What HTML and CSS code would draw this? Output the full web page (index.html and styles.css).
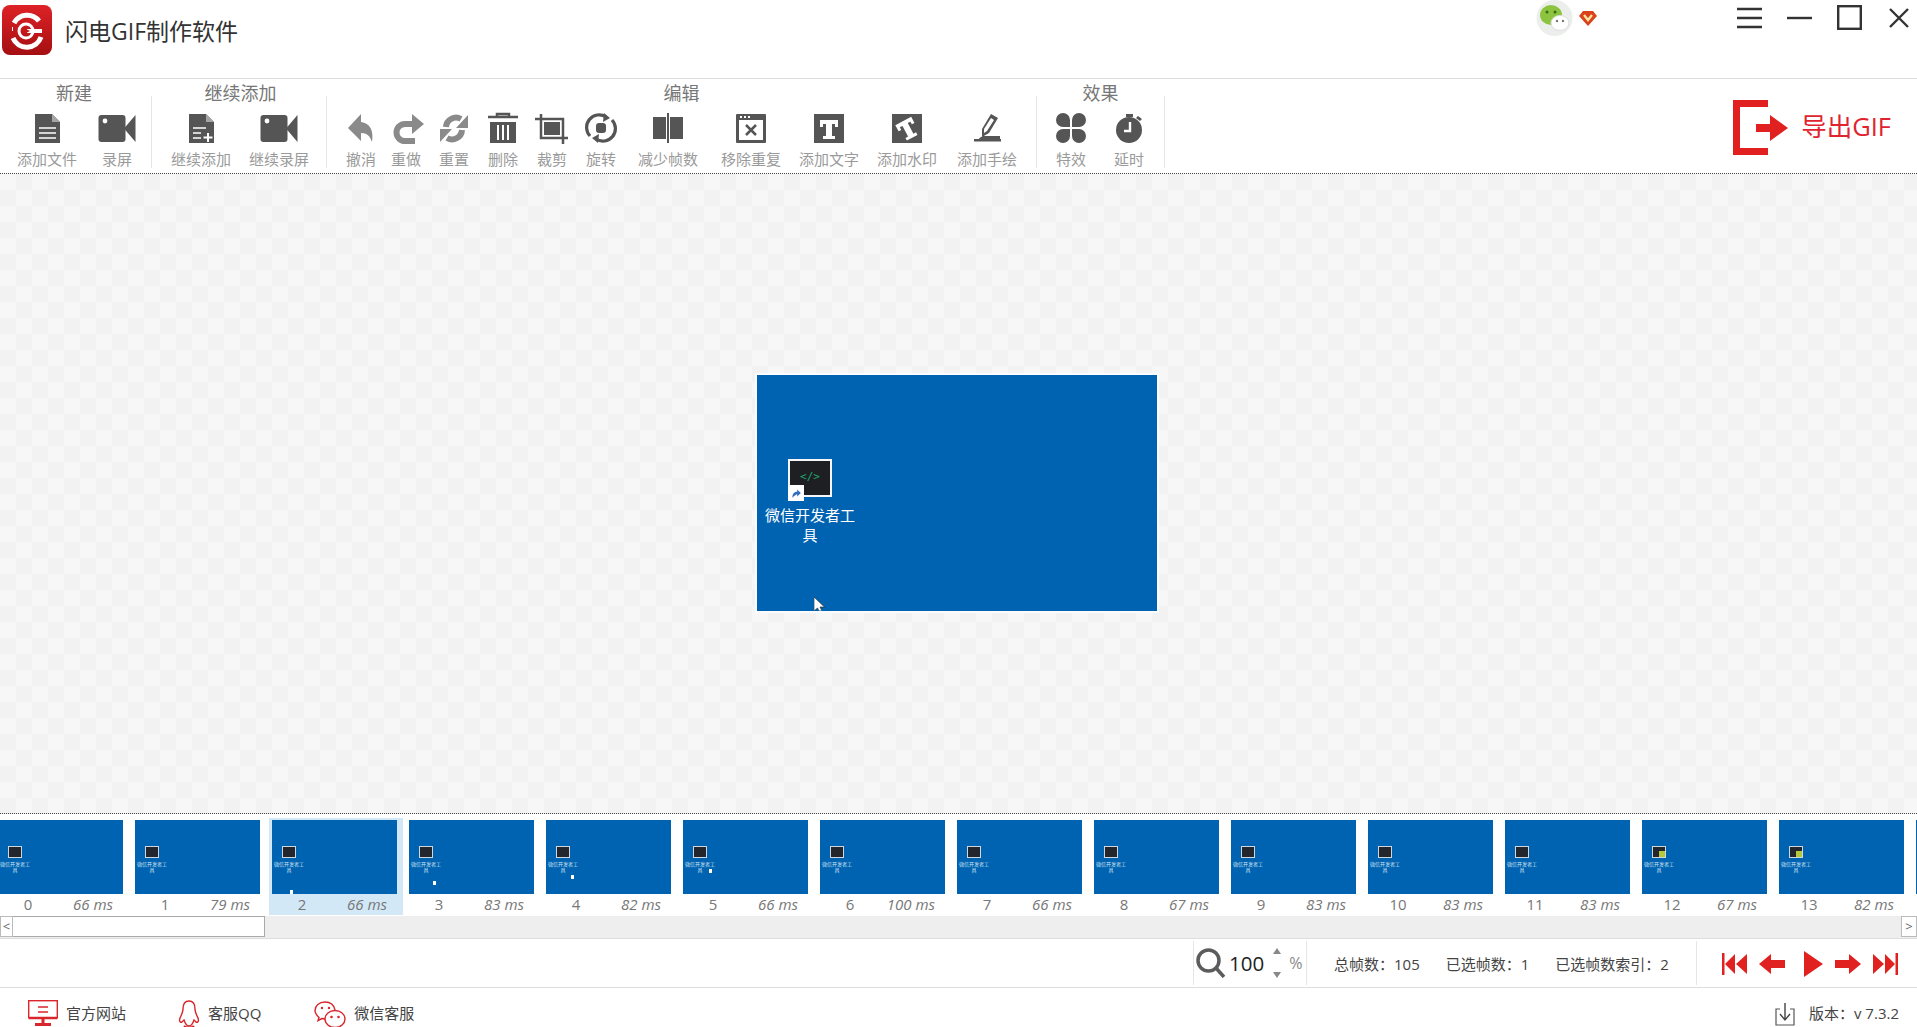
FILE: index.html
```html
<!DOCTYPE html>
<html lang="zh-CN">
<head>
  <meta charset="UTF-8" />
  <title>闪电GIF制作软件</title>
  <link rel="stylesheet" href="styles.css">
</head>
<body>

  <!-- 标题栏 -->
  <header class="titlebar">
    <svg class="logo" viewBox="0 0 50 50">
      <defs>
        <linearGradient id="logoBg" x1="0" y1="0" x2="0" y2="1">
          <stop offset="0" stop-color="#dd2226"/>
          <stop offset="1" stop-color="#a50f12"/>
        </linearGradient>
      </defs>
      <rect width="50" height="50" rx="8" fill="url(#logoBg)"/>
      <path d="M12 18a15 15 0 0 1 25-2M39 32a15 15 0 0 1-28 1" fill="none" stroke="#fff" stroke-width="5"/>
      <path d="M11 24h-1M25 26h15" fill="none" stroke="#fff" stroke-width="4"/>
      <circle cx="24" cy="26" r="7" fill="none" stroke="#fff" stroke-width="3"/>
      <path d="M22 23l6 3-6 3z" fill="#c8161b"/>
    </svg>
    <div class="app-name">闪电GIF制作软件</div>
    <div class="title-right">
      <svg class="avatar" viewBox="0 0 37 37">
        <circle cx="18.5" cy="18" r="18" fill="#eceeec"/>
        <ellipse cx="15" cy="15" rx="11" ry="10" fill="#8cc440"/>
        <circle cx="11" cy="12" r="1.5" fill="#3c6a12"/>
        <circle cx="19" cy="12" r="1.5" fill="#3c6a12"/>
        <ellipse cx="24" cy="23" rx="9" ry="7.5" fill="#fff" stroke="#ddd"/>
        <circle cx="21" cy="21" r="1.2" fill="#777"/>
        <circle cx="27" cy="21" r="1.2" fill="#777"/>
      </svg>
      <svg class="vip" viewBox="0 0 18 16">
        <path d="M4 1h10l4 5-9 10L0 6z" fill="#d9421a"/>
        <path d="M5 5l4 5 4-5" fill="none" stroke="#fbe3a0" stroke-width="2.4"/>
      </svg>
      <svg class="win-btn menu" viewBox="0 0 25 25"><path d="M0 4h25M0 13h25M0 22h25" stroke="#333" stroke-width="2.4"/></svg>
      <svg class="win-btn min" viewBox="0 0 25 25"><path d="M0 13h25" stroke="#333" stroke-width="2.4"/></svg>
      <svg class="win-btn max" viewBox="0 0 25 25"><rect x="1.2" y="1.2" width="22.6" height="22.6" fill="none" stroke="#333" stroke-width="2.4"/></svg>
      <svg class="win-btn close" viewBox="0 0 20 20"><path d="M1 1l18 18M19 1L1 19" stroke="#333" stroke-width="2.4"/></svg>
    </div>
  </header>

  <!-- 工具栏 -->
  <div class="toolbar">
    <section class="group group-new">
      <h2>新建</h2>
      <div class="tools">
        <div class="tool wide">
          <svg viewBox="0 0 40 32"><path d="M8 2h17l8 8v21H8z" fill="#555"/><path d="M25 2l8 8h-8z" fill="#a5a5a5"/><path d="M12 16h17M12 21h17M12 26h17" stroke="#fff" stroke-width="1.5"/></svg>
          <span>添加文件</span>
        </div>
        <div class="tool">
          <svg viewBox="0 0 40 32"><rect x="1.5" y="3" width="27" height="27" rx="3" fill="#555"/><path d="M27 16.5L38.5 3v27z" fill="#555"/><circle cx="8" cy="9" r="2.4" fill="#fff"/></svg>
          <span>录屏</span>
        </div>
      </div>
    </section>
    <div class="sep"></div>
    <section class="group group-add">
      <h2>继续添加</h2>
      <div class="tools">
        <div class="tool wide">
          <svg viewBox="0 0 40 32"><path d="M8 2h17l8 8v21H8z" fill="#555"/><path d="M25 2l8 8h-8z" fill="#a5a5a5"/><path d="M12 16h13M12 21h8M12 26h8" stroke="#fff" stroke-width="1.5"/><path d="M27 21v9M22.5 25.5h9" stroke="#fff" stroke-width="2"/></svg>
          <span>继续添加</span>
        </div>
        <div class="tool wide">
          <svg viewBox="0 0 40 32"><rect x="1.5" y="3" width="27" height="27" rx="3" fill="#555"/><path d="M27 16.5L38.5 3v27z" fill="#555"/><circle cx="8" cy="9" r="2.4" fill="#fff"/></svg>
          <span>继续录屏</span>
        </div>
      </div>
    </section>
    <div class="sep"></div>
    <section class="group group-edit">
      <h2>编辑</h2>
      <div class="tools">
        <div class="tool off">
          <svg viewBox="0 0 40 32"><path d="M20 2L7 16l13 13v-8c6 0 9 3 11 9 2-11-2-19-11-20z" fill="#8a8a8a"/></svg>
          <span>撤消</span>
        </div>
        <div class="tool off">
          <svg viewBox="0 0 40 32"><path d="M26 2l12 10-12 10z" fill="#8a8a8a"/><path d="M28 12h-9a8.5 8.5 0 0 0 0 17h10" fill="none" stroke="#8a8a8a" stroke-width="6"/></svg>
          <span>重做</span>
        </div>
        <div class="tool off">
          <svg viewBox="0 0 40 32"><path d="M12 15a10 10 0 0 1 15-8" fill="none" stroke="#8a8a8a" stroke-width="6"/><path d="M34 3v13H22z" fill="#8a8a8a"/><path d="M28 18a10 10 0 0 1-15 8" fill="none" stroke="#8a8a8a" stroke-width="6"/><path d="M6 30V17h12z" fill="#8a8a8a"/></svg>
          <span>重置</span>
        </div>
        <div class="tool">
          <svg viewBox="0 0 40 32"><path d="M5 5h30M14 5V2h12v3" fill="none" stroke="#555" stroke-width="2.5"/><rect x="7" y="10" width="26" height="21" fill="#555"/><path d="M15 13v15M20 13v15M25 13v15" stroke="#fff" stroke-width="2"/></svg>
          <span>删除</span>
        </div>
        <div class="tool">
          <svg viewBox="0 0 40 32"><path d="M9 2v24h27M3 7h28v25" fill="none" stroke="#555" stroke-width="2.5"/><rect x="12" y="10" width="16" height="13" fill="#555"/></svg>
          <span>裁剪</span>
        </div>
        <div class="tool">
          <svg viewBox="0 0 40 32"><path d="M9 24A12.5 12.5 0 0 1 25 5" fill="none" stroke="#555" stroke-width="3.2"/><path d="M31 8A12.5 12.5 0 0 1 15 27" fill="none" stroke="#555" stroke-width="3.2"/><path d="M23 1l6 5-7 4zM17 31l-6-5 7-4z" fill="#555"/><rect x="15" y="11" width="10" height="10" rx="3" fill="#555"/></svg>
          <span>旋转</span>
        </div>
        <div class="tool wide">
          <svg viewBox="0 0 40 32"><rect x="5" y="5" width="13" height="22" fill="#555"/><rect x="22" y="5" width="13" height="22" fill="#555"/><rect x="19" y="1" width="2" height="30" fill="#555"/></svg>
          <span>减少帧数</span>
        </div>
        <div class="tool wide">
          <svg viewBox="0 0 40 32"><rect x="5" y="2" width="30" height="29" rx="1" fill="#555"/><rect x="8" y="8" width="24" height="20" fill="#fff"/><path d="M9 5h2M13 5h2M17 5h2" stroke="#fff" stroke-width="2"/><path d="M15 13l10 10M25 13L15 23" stroke="#555" stroke-width="2.5"/></svg>
          <span>移除重复</span>
        </div>
        <div class="tool wide">
          <svg viewBox="0 0 40 32"><rect x="5" y="2" width="30" height="29" fill="#555"/><path d="M11 8h18v7h-3v-3h-3v12h3v3H14v-3h3V12h-3v3h-3z" fill="#fff"/></svg>
          <span>添加文字</span>
        </div>
        <div class="tool wide">
          <svg viewBox="0 0 40 32"><rect x="5" y="2" width="30" height="29" fill="#555"/><path d="M11 8h18v7h-3v-3h-3v12h3v3H14v-3h3V12h-3v3h-3z" fill="#fff" transform="rotate(-28 20 16)"/></svg>
          <span>添加水印</span>
        </div>
        <div class="tool wide">
          <svg viewBox="0 0 40 32"><path d="M24 2l7 4-9 15-7 4 0-8z" fill="#555"/><path d="M24 6l3 2-7 11-3 2 0-4z" fill="#fff"/><path d="M16 24c-2 1-4 2-4 3h21v-3z" fill="#555"/><rect x="7" y="27" width="27" height="2.5" fill="#555"/></svg>
          <span>添加手绘</span>
        </div>
      </div>
    </section>
    <div class="sep"></div>
    <section class="group group-fx">
      <h2>效果</h2>
      <div class="tools">
        <div class="tool">
          <svg viewBox="0 0 40 32"><path d="M19 15H12A7 7 0 1 1 19 8zM21 15V8a7 7 0 1 1 7 7zM19 17v7a7 7 0 1 1-7-7zM21 17h7a7 7 0 1 1-7 7z" fill="#555"/></svg>
          <span>特效</span>
        </div>
        <div class="tool">
          <svg viewBox="0 0 40 32"><circle cx="20" cy="18" r="13" fill="#555"/><path d="M17 2h7v3h-7zM29 4l4 3-2 2-4-3z" fill="#555"/><path d="M21 10v9h-6" fill="none" stroke="#fff" stroke-width="2.4"/></svg>
          <span>延时</span>
        </div>
      </div>
    </section>
    <div class="sep"></div>

    <div class="export">
      <svg viewBox="0 0 56 56"><path d="M35 3.5H3.5v48H35" fill="none" stroke="#e0211f" stroke-width="7"/><path d="M23 24h14v-9l18 13-18 13v-9H23z" fill="#e0211f"/></svg>
      <span>导出GIF</span>
    </div>
  </div>

  <!-- 预览区 -->
  <main class="canvas">
    <div class="frame">
      <div class="shortcut">
        <div class="app-icon">
          <span class="code">&lt;/&gt;</span>
          <span class="arrow-badge"><svg viewBox="0 0 10 10"><path d="M2 9C2 5 4 4 6 4V2l3 3-3 3V6C5 6 4 7 2 9z" fill="#2d6cc0"/></svg></span>
        </div>
        <div class="app-label">微信开发者工具</div>
      </div>
      <svg class="cursor" viewBox="0 0 11 16"><path d="M0 0v14l3.5-3 2.5 5 2.5-1-2.5-5h4.5z" fill="#fff" stroke="#222" stroke-width=".6"/></svg>
    </div>
  </main>

  <!-- 帧列表 -->
  <div class="strip" id="strip"></div>

  <div class="scrollbar">
    <div class="scroll-btn">&lt;</div>
    <div class="scroll-thumb"></div>
    <div class="scroll-btn scroll-next">&gt;</div>
  </div>

  <!-- 状态栏 -->
  <div class="statusbar">
    <div class="zoom-box">
      <svg class="zoom-icon" viewBox="0 0 30 30"><circle cx="12.5" cy="12.5" r="10.5" fill="none" stroke="#5c5c5c" stroke-width="3.5"/><path d="M20 20l8 9" stroke="#5c5c5c" stroke-width="3.5"/></svg>
      <span class="zoom-val">100</span>
      <span class="zoom-spin"><i class="up"></i><i class="down"></i></span>
      <span class="zoom-pct">%</span>
    </div>
    <div class="stats">
      <span>总帧数：105</span>
      <span>已选帧数：1</span>
      <span>已选帧数索引：2</span>
    </div>
    <div class="player">
      <svg viewBox="0 0 26 24" width="26" height="24"><path d="M1 1h2.5v22H1zM14 2v20L4 12zM26 2v20L15 12z" fill="#e0211f"/></svg>
      <svg viewBox="0 0 26 24" width="26" height="24"><path d="M12 2v6h14v8H12v6L0 12z" fill="#e0211f"/></svg>
      <svg class="play" viewBox="0 0 20 26" width="20" height="26"><path d="M1 0l19 13L1 26z" fill="#e0211f"/></svg>
      <svg viewBox="0 0 26 24" width="26" height="24"><path d="M14 2v6H0v8h14v6l12-10z" fill="#e0211f"/></svg>
      <svg viewBox="0 0 26 24" width="26" height="24"><path d="M25 1h-2.5v22H25zM12 2v20l10-10zM0 2v20l11-10z" fill="#e0211f"/></svg>
    </div>
  </div>

  <footer class="footer">
    <div class="link link-site">
      <svg viewBox="0 0 30 30" width="30" height="30"><rect x=".7" y=".7" width="28.6" height="17" fill="none" stroke="#d8262c" stroke-width="1.4"/><path d="M10 7h10M10 12h10" stroke="#d8262c" stroke-width="1.4"/><path d="M.7 18h28.6" stroke="#d8262c" stroke-width="2.5"/><path d="M15 18v6M7 24.5h16" stroke="#d8262c" stroke-width="3"/></svg>
      <span>官方网站</span>
    </div>
    <div class="link link-qq">
      <svg viewBox="0 0 22 30" width="22" height="30"><path d="M11 1c-4 0-6 3-6 8 0 3-1 5-3 9-1 3 0 5 2 4l2-2c1 3 2 6 5 6s4-3 5-6l2 2c2 1 3-1 2-4-2-4-3-6-3-9 0-5-2-8-6-8z" fill="none" stroke="#d8262c" stroke-width="1.4"/><path d="M6 26c2 2 8 2 10 0" fill="none" stroke="#d8262c" stroke-width="2"/></svg>
      <span>客服QQ</span>
    </div>
    <div class="link link-wx">
      <svg viewBox="0 0 32 30" width="32" height="30"><path d="M21 10C20 5 16 2 11 2 5 2 1 6 1 10.5c0 3 2 5 4 7l-1 3 4-2c1 0 2 .5 3 .5" fill="none" stroke="#d8262c" stroke-width="1.4"/><ellipse cx="21" cy="19" rx="10" ry="8.5" fill="none" stroke="#d8262c" stroke-width="1.4"/><circle cx="8" cy="8" r="1.2" fill="#d8262c"/><circle cx="15" cy="8" r="1.2" fill="#d8262c"/><circle cx="17.5" cy="17" r="1.3" fill="#d8262c"/><circle cx="24.5" cy="17" r="1.3" fill="#d8262c"/></svg>
      <span>微信客服</span>
    </div>
    <div class="version">
      <svg viewBox="0 0 20 24" width="20" height="24"><path d="M5 7H1v16h18V7h-4" fill="none" stroke="#555" stroke-width="1.2"/><path d="M10 1v16M5 12l5 6 5-6" fill="none" stroke="#444" stroke-width="1.4"/></svg>
      <span>版本：v 7.3.2</span>
    </div>
  </footer>

  <script>
    // 帧数据
    const frames = [66, 79, 66, 83, 82, 66, 100, 66, 67, 83, 83, 83, 67, 82];
    const strip = document.getElementById('strip');

    frames.forEach((ms, i) => {
      const item = document.createElement('div');
      item.className = 'frame-item' + (i === 2 ? ' selected' : '');
      // 鼠标在缩略图中的位置
      const pointer = i >= 2 && i < 6 ? `<b class="mini-cursor c${i}"></b>` : '';
      const glow = i >= 12 ? '<b class="mini-glow"></b>' : '';
      item.innerHTML = `
        <div class="thumb">
          <div class="mini-icon">${glow}</div>
          <div class="mini-label">微信开发者工<br>具</div>
          ${pointer}
        </div>
        <div class="meta"><span class="idx">${i}</span><span class="ms">${ms} ms</span></div>`;
      strip.appendChild(item);
    });

    // 右边缘露出的下一帧
    const next = document.createElement('div');
    next.className = 'frame-item';
    next.innerHTML = '<div class="thumb"></div>';
    strip.appendChild(next);
  </script>

</body>
</html>
```
FILE: styles.css
```css
* {
  box-sizing: border-box;
}
body {
  margin: 0;
  width: 1917px;
  height: 1027px;
  overflow: hidden;
  background: #fff;
  color: #444;
  font-family: "Open Sans", "Noto Sans CJK SC", sans-serif;
  display: flex;
  flex-direction: column;
}

/* 标题栏 */
.titlebar {
  height: 79px;
  flex: none;
  display: flex;
  border-bottom: 1px solid #ddd;
  padding: 5px 0 0 2px;
}
.logo {
  width: 50px;
  height: 50px;
}
.app-name {
  margin: 1px 0 0 13px;
  font-size: 23px;
  line-height: 50px;
  color: #333;
}
.title-right {
  margin-left: auto;
  margin-top: -5px;
  display: flex;
  align-items: flex-start;
  padding-right: 8px;
}
.avatar {
  width: 37px;
  height: 37px;
}
.vip {
  width: 18px;
  height: 16px;
  margin: 10px 140px 0 6px;
}
.win-btn {
  width: 25px;
  height: 25px;
  margin-top: 5px;
  margin-right: 25px;
}
.win-btn.close {
  width: 20px;
  height: 20px;
  margin: 8px 0 0 2px;
}

/* 工具栏 */
.toolbar {
  height: 95px;
  flex: none;
  display: flex;
  border-bottom: 1px dotted #444;
}
.group {
  padding-top: 2px;
  text-align: center;
}
.group h2 {
  margin: 0 0 7px;
  font-size: 18px;
  font-weight: normal;
  line-height: 24px;
  color: #777;
}
.group-new {
  width: 151px;
}
.group-new h2 {
  padding-right: 3px;
}
.group-add {
  width: 174px;
}
.group-add h2 {
  padding-left: 3px;
}
.group-edit {
  width: 709px;
}
.group-fx {
  width: 127px;
}
.tools {
  display: flex;
  gap: 18px;
  padding-left: 19px;
}
.group-new .tools {
  gap: 25px;
  padding-left: 17px;
}
.group-fx .tools {
  gap: 28px;
}
.group-edit .tool:nth-child(2) {
  margin-left: -3px;
}
.group-edit .tool:nth-child(4),
.group-edit .tool:nth-child(5),
.group-edit .tool:nth-child(6) {
  margin-left: 1px;
}
.group-edit .tool:nth-child(7) {
  margin-left: 4px;
}
.group-edit .tool:nth-child(8) {
  margin-left: 5px;
}
.group-edit .tool:nth-child(11) {
  margin-left: 2px;
}
.tool {
  width: 30px;
  display: flex;
  flex-direction: column;
  align-items: center;
}
.tool.wide {
  width: 60px;
}
.tool svg {
  width: 40px;
  height: 32px;
  flex: none;
}
.tool span {
  margin-top: 5px;
  font-size: 15px;
  line-height: 20px;
  white-space: nowrap;
  color: #9a9a9a;
}
.sep {
  width: 1px;
  height: 72px;
  margin-top: 17px;
  flex: none;
  background: #e6e6e6;
}
.export {
  margin-left: auto;
  padding: 21px 26px 0 0;
  display: flex;
  align-items: flex-start;
  color: #df2430;
}
.export svg {
  width: 56px;
  height: 56px;
}
.export span {
  margin: 8px 0 0 12px;
  font-size: 25.5px;
  line-height: 36px;
}

/* 预览区 */
.canvas {
  flex: 1;
  display: flex;
  align-items: center;
  justify-content: center;
  padding: 0 3px 2px 0;
  border-bottom: 1px dotted #444;
  background-color: #f7f7f7;
  background-image:
    linear-gradient(45deg, #f2f2f2 25%, transparent 25%, transparent 75%, #f2f2f2 75%),
    linear-gradient(45deg, #f2f2f2 25%, transparent 25%, transparent 75%, #f2f2f2 75%);
  background-size: 32px 32px;
  background-position: 0 0, 16px 16px;
}
.frame {
  position: relative;
  width: 400px;
  height: 236px;
  background: #0063b1;
  box-shadow: 0 0 0 2px #fafcff;
}
.shortcut {
  position: absolute;
  left: 0;
  top: 84px;
  width: 106px;
  color: #fff;
  text-align: center;
}
.app-icon {
  position: relative;
  width: 44px;
  height: 38px;
  margin: 0 auto;
  background: #1e1f22;
  border: 2px solid #f4f6f8;
  text-align: center;
}
.code {
  display: block;
  font-family: "DejaVu Sans Mono", monospace;
  font-size: 11px;
  line-height: 32px;
  color: #1fa971;
}
.arrow-badge {
  position: absolute;
  left: -2px;
  bottom: -6px;
  width: 16px;
  height: 16px;
  padding: 2px;
  background: #fff;
}
.arrow-badge svg {
  display: block;
}
.app-label {
  margin-top: 8px;
  padding: 0 5px;
  font-size: 15px;
  line-height: 20px;
}
.cursor {
  position: absolute;
  left: 57px;
  top: 222px;
  width: 11px;
  height: 16px;
  clip-path: inset(0 0 2px 0);
}

/* 帧列表 */
.strip {
  height: 102px;
  flex: none;
  display: flex;
  gap: 3px;
  padding-top: 4px;
  margin-left: -5px;
  overflow: hidden;
}
.frame-item {
  width: 134px;
  flex: none;
  height: 97px;
  padding: 2px 6px 0 3px;
}
.frame-item.selected {
  background: #d2e8f7;
}
.thumb {
  position: relative;
  height: 74px;
  background: #0063b1;
  overflow: hidden;
}
.mini-icon {
  position: absolute;
  left: 10px;
  top: 26px;
  width: 14px;
  height: 12px;
  background: #23262c;
  border: 1px solid #cfd6de;
}
.mini-glow {
  position: absolute;
  right: 0;
  bottom: 0;
  width: 6px;
  height: 6px;
  background: #b5c93c;
}
.mini-label {
  position: absolute;
  left: 1px;
  top: 41px;
  width: 32px;
  font-size: 5px;
  line-height: 6px;
  text-align: center;
  color: #cfe2f3;
}
.mini-cursor {
  position: absolute;
  width: 3px;
  height: 4px;
  background: #fff;
}
.mini-cursor.c2 {
  left: 18px;
  top: 70px;
}
.mini-cursor.c3 {
  left: 24px;
  top: 61px;
}
.mini-cursor.c4 {
  left: 25px;
  top: 55px;
}
.mini-cursor.c5 {
  left: 26px;
  top: 49px;
}
.meta {
  display: flex;
  align-items: center;
  height: 19px;
  color: #777;
}
.idx {
  width: 60px;
  text-align: center;
  font-size: 15px;
}
.ms {
  margin-left: auto;
  padding-right: 10px;
  font-size: 15px;
  font-style: italic;
}

.scrollbar {
  height: 22px;
  flex: none;
  display: flex;
  background: #eee;
  border-bottom: 1px solid transparent;
}
.scroll-btn {
  width: 13px;
  height: 21px;
  border: 1px solid #bbb;
  background: #fff;
  font-size: 13px;
  line-height: 18px;
  text-align: center;
  color: #666;
}
.scroll-thumb {
  width: 252px;
  height: 21px;
  background: #fff;
  border: 1px solid #aaa;
  border-left: 0;
}
.scroll-next {
  width: 16px;
  margin-left: auto;
}

/* 状态栏 */
.statusbar {
  height: 50px;
  flex: none;
  display: flex;
  align-items: center;
  border-top: 1px solid #ddd;
  border-bottom: 1px solid #ddd;
}
.zoom-box {
  margin-left: 1193px;
  width: 114px;
  height: 44px;
  display: flex;
  align-items: center;
  border-left: 1px solid #e6e6e6;
  border-right: 1px solid #e6e6e6;
  padding-left: 2px;
}
.zoom-icon {
  width: 30px;
  height: 30px;
  flex: none;
}
.zoom-val {
  margin-left: 3px;
  font-size: 20.5px;
  color: #222;
}
.zoom-spin {
  width: 8px;
  height: 30px;
  margin-left: 9px;
  display: flex;
  flex-direction: column;
  justify-content: space-between;
}
.zoom-spin i {
  width: 0;
  height: 0;
  border-left: 4px solid transparent;
  border-right: 4px solid transparent;
}
.zoom-spin .up {
  border-bottom: 6px solid #888;
}
.zoom-spin .down {
  border-top: 6px solid #888;
}
.zoom-pct {
  margin-left: 8px;
  font-size: 16px;
  color: #888;
}
.stats {
  width: 390px;
  height: 44px;
  display: flex;
  align-items: center;
  gap: 26px;
  padding-left: 27px;
  font-size: 15px;
  color: #444;
  border-right: 1px solid #e6e6e6;
}
.player {
  margin: 2px 0 0 24px;
  display: flex;
  align-items: center;
  gap: 12px;
}
.player .play {
  margin-left: 6px;
}

/* 底部 */
.footer {
  height: 39px;
  flex: none;
  display: flex;
  padding-top: 14px;
  font-size: 15px;
  line-height: 22px;
  color: #444;
}
.link {
  display: flex;
  align-items: flex-start;
  gap: 8px;
}
.link svg {
  flex: none;
  margin-top: -2px;
}
.link-site {
  margin-left: 28px;
}
.link-qq {
  margin-left: 52px;
}
.link-wx {
  margin-left: 53px;
}
.version {
  margin-left: auto;
  padding-right: 18px;
  display: flex;
  align-items: flex-start;
  gap: 14px;
}
```
